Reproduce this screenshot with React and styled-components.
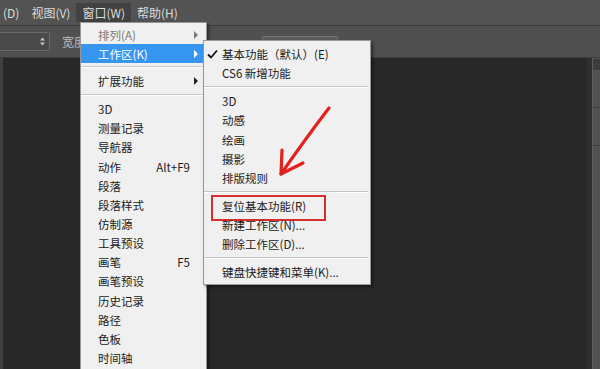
import React from 'react'
import styled, { createGlobalStyle } from 'styled-components'

const GlobalStyle = createGlobalStyle`
  html, body { margin: 0; padding: 0; background: #282828; }
  * { box-sizing: border-box; }
`

const FONT = `"Noto Sans CJK SC", "Liberation Sans", sans-serif`

const mainItems = [
  { text: '排列(A)', arrow: true, disabled: true },
  { text: '工作区(K)', arrow: true, active: true },
  { sep: true },
  { text: '扩展功能', arrow: true },
  { sep: true },
  { text: '3D' },
  { text: '测量记录' },
  { text: '导航器' },
  { text: '动作', key: 'Alt+F9' },
  { text: '段落' },
  { text: '段落样式' },
  { text: '仿制源' },
  { text: '工具预设' },
  { text: '画笔', key: 'F5' },
  { text: '画笔预设' },
  { text: '历史记录' },
  { text: '路径' },
  { text: '色板' },
  { text: '时间轴' },
]

const subItems = [
  { text: '基本功能（默认）(E)', checked: true },
  { text: 'CS6 新增功能' },
  { sep: true },
  { text: '3D' },
  { text: '动感' },
  { text: '绘画' },
  { text: '摄影' },
  { text: '排版规则' },
  { sep: true },
  { text: '复位基本功能(R)', boxed: true },
  { text: '新建工作区(N)...' },
  { text: '删除工作区(D)...' },
  { sep: true },
  { text: '键盘快捷键和菜单(K)...' },
]

const App = () => {
  return (
    <Page>
      <GlobalStyle />
      <MenuBar>
        <MenuTitle $first>(D)</MenuTitle>
        <MenuTitle>视图(V)</MenuTitle>
        <MenuTitle $open>窗口(W)</MenuTitle>
        <MenuTitle>帮助(H)</MenuTitle>
      </MenuBar>

      <OptionsBar>
        <Spinner>
          <svg width="5" height="9" viewBox="0 0 5 9">
            <path d="M0 3.5 L2.5 0.5 L5 3.5 Z M0 5.5 L2.5 8.5 L5 5.5 Z" fill="#c8c8c8" />
          </svg>
        </Spinner>
        <OptLabel>宽度</OptLabel>
        <OptButton>调整边缘...</OptButton>
      </OptionsBar>

      <Workspace>
        <LeftStrip />
        <Canvas />
        <RightPanel>
          <PanelHead />
          <PanelRow />
          <PanelRow />
        </RightPanel>
      </Workspace>

      <Dropdown>
        {mainItems.map((it, i) =>
          it.sep ? (
            <Separator key={i} />
          ) : (
            <Item key={i} $active={it.active} $disabled={it.disabled}>
              <span>{it.text}</span>
              {it.key && <Shortcut>{it.key}</Shortcut>}
              {it.arrow && <Arrow />}
            </Item>
          )
        )}
      </Dropdown>

      <SubMenu>
        {subItems.map((it, i) =>
          it.sep ? (
            <Separator key={i} />
          ) : (
            <SubItem key={i} $boxed={it.boxed}>
              {it.checked && (
                <Check width="11" height="10" viewBox="0 0 11 10">
                  <polyline points="1,5.5 4,8.5 10,1.5" fill="none" stroke="#111" strokeWidth="1.8" />
                </Check>
              )}
              {it.text}
            </SubItem>
          )
        )}
      </SubMenu>

      <RedArrow width="600" height="369" viewBox="0 0 600 369">
        <g fill="none" stroke="#e3211c" strokeWidth="3.2" strokeLinecap="round" strokeLinejoin="round">
          <path d="M329 108 Q306 138 281 174" />
          <path d="M282 150 L281 174 L303 163" />
        </g>
      </RedArrow>
    </Page>
  )
}

const Page = styled.div`
  position: relative;
  width: 600px;
  height: 369px;
  overflow: hidden;
  display: flex;
  flex-direction: column;
  background: #535353;
  font-family: ${FONT};
`

const MenuBar = styled.div`
  height: 25px;
  display: flex;
  align-items: center;
  background: #535353;
`

const MenuTitle = styled.div`
  height: 19px;
  line-height: 19px;
  padding: 0 6px 0 ${(p) => (p.$first ? '3px' : '6px')};
  font-size: 12px;
  color: #dcdcdc;
  background: ${(p) => (p.$open ? '#424242' : 'transparent')};
`

const OptionsBar = styled.div`
  height: 32px;
  display: flex;
  align-items: center;
  border-top: 1px solid #3c3c3c;
  background: #505050;
`

const Spinner = styled.div`
  width: 50px;
  height: 19px;
  background: #4a4a4a;
  border: 1px solid #6a6a6a;
  border-left: none;
  border-radius: 0 2px 2px 0;
  display: flex;
  justify-content: flex-end;
  align-items: center;
  padding-right: 4px;
`

const OptLabel = styled.div`
  margin-left: 12px;
  font-size: 12px;
  color: #bdbdbd;
`

const OptButton = styled.div`
  margin-left: 176px;
  margin-top: 8px;
  width: 76px;
  height: 20px;
  border: 1px solid #727272;
  border-radius: 2px;
  background: #5c5c5c;
  color: #c8c8c8;
  font-size: 11px;
  line-height: 18px;
  text-align: center;
`

const Workspace = styled.div`
  flex: 1;
  display: flex;
  border-top: 1px solid #3a3a3a;
`

const LeftStrip = styled.div`
  width: 3px;
  background: #404040;
`

const Canvas = styled.div`
  flex: 1;
  background: #282828;
  border-right: 5px solid #2f2f2f;
`

const RightPanel = styled.div`
  width: 8px;
  background: #525252;
  border-left: 1px solid #5e5e5e;
`

const PanelHead = styled.div`
  height: 11px;
  margin-top: 1px;
  background: #3c3c3c;
`

const PanelRow = styled.div`
  height: 38px;
  border-bottom: 1px solid #3a3a3a;
`

const Dropdown = styled.div`
  position: absolute;
  left: 80px;
  top: 22px;
  width: 127px;
  height: 380px;
  padding-top: 2px;
  background: #f0f0f0;
  border: 1px solid #979797;
  box-shadow: 2px 2px 3px rgba(0, 0, 0, 0.45);
`

const Item = styled.div`
  position: relative;
  height: 19.15px;
  display: flex;
  align-items: center;
  padding: 0 16px 0 17px;
  font-size: 11.5px;
  color: ${(p) => (p.$active ? '#ffffff' : p.$disabled ? '#7a7a7a' : '#1a1a1a')};
  background: ${(p) => (p.$active ? '#3796f0' : 'transparent')};
  white-space: nowrap;
  --arrow: ${(p) => (p.$active ? '#ffffff' : p.$disabled ? '#7a7a7a' : '#222222')};
`

const Shortcut = styled.span`
  margin-left: auto;
`

const Arrow = styled.span`
  position: absolute;
  right: 8px;
  top: 50%;
  margin-top: -4px;
  width: 0;
  height: 0;
  border-left: 4px solid var(--arrow);
  border-top: 4px solid transparent;
  border-bottom: 4px solid transparent;
`

const Separator = styled.div`
  height: 8.6px;
  position: relative;
  &::after {
    content: '';
    position: absolute;
    left: 0;
    right: 2px;
    top: 3px;
    height: 1px;
    background: #c4c4c4;
    border-bottom: 1px solid #ffffff;
    box-sizing: content-box;
  }
`

const SubMenu = styled.div`
  position: absolute;
  left: 203px;
  top: 40px;
  width: 168px;
  padding: 3.4px 0 2px;
  background: #f0f0f0;
  border: 1px solid #979797;
  box-shadow: 2px 2px 3px rgba(0, 0, 0, 0.45);
`

const SubItem = styled.div`
  position: relative;
  height: 19.25px;
  display: flex;
  align-items: center;
  padding-left: 18px;
  font-size: 11.5px;
  color: #1a1a1a;
  white-space: nowrap;
  &::before {
    content: '';
    display: ${(p) => (p.$boxed ? 'block' : 'none')};
    position: absolute;
    left: 7px;
    top: -1.5px;
    width: 111px;
    height: 22px;
    border: 2px solid #d42f2c;
  }
`

const Check = styled.svg`
  position: absolute;
  left: 3px;
  top: 5px;
`

const RedArrow = styled.svg`
  position: absolute;
  left: 0;
  top: 0;
  pointer-events: none;
`

export default App
